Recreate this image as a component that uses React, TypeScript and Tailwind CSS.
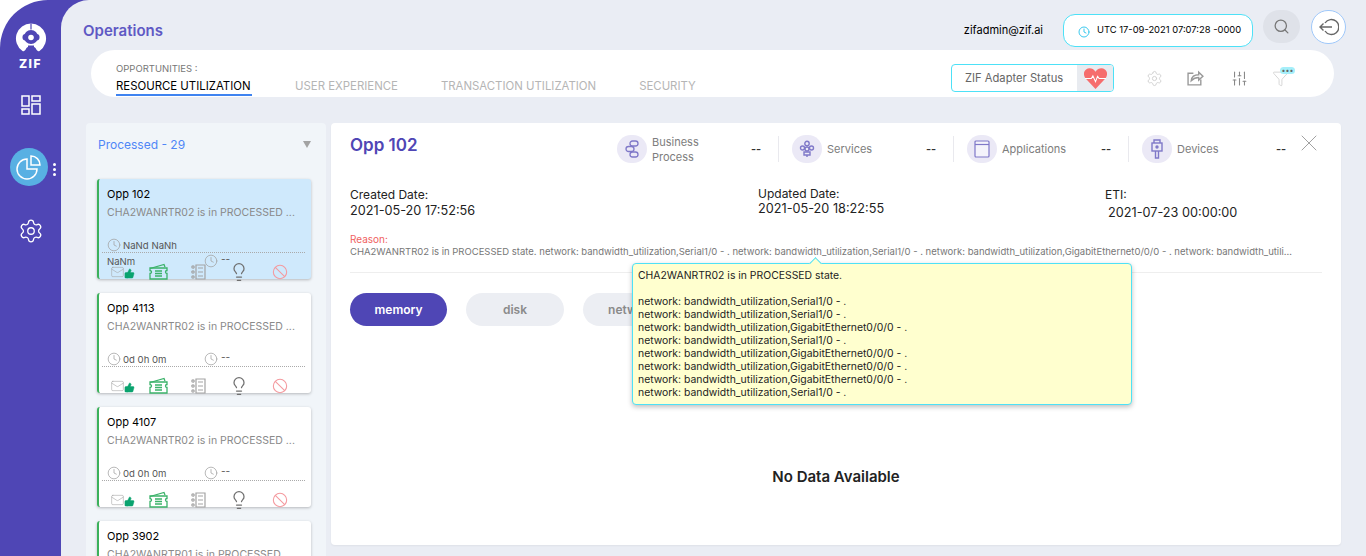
import { Search, Clock, X, Settings, SlidersVertical, Funnel, Lightbulb, Ban, ThumbsUp, Mail } from "lucide-react"

function Logo() {
  return (
    <svg width="32" height="32" viewBox="0 0 32 32">
      <path d="M16 1.500a15 15 0 0 1 8.500 27.400c-1.500.8-2.500-.4-3.300-1.700-.7-1.200-1.200-2.200-2.200-2.200v-1.500h-6V25c-1 0-1.500 1-2.200 2.200-.8 1.300-1.800 2.500-3.300 1.700A15 15 0 0 1 16 1.500z" fill="#fff" />
      <circle cx="16" cy="15" r="7" fill="#4f46b5" />
      <rect x="7.500" y="12" width="17" height="6.500" rx="3" fill="#4f46b5" />
      <circle cx="16" cy="15.500" r="2.800" fill="#fff" />
      <rect x="15.400" y="1.500" width="1.200" height="6" fill="#4f46b5" />
    </svg>
  )
}

function DashIcon() {
  return (
    <svg width="22" height="22" viewBox="0 0 22 22" fill="none" stroke="#fff" strokeWidth="1.500">
      <rect x="2" y="2" width="7" height="10" />
      <rect x="12" y="2" width="8" height="5" />
      <rect x="2" y="15" width="7" height="5" />
      <rect x="12" y="10" width="8" height="10" />
    </svg>
  )
}

function PieIcon() {
  return (
    <svg width="26" height="26" viewBox="0 0 26 26" fill="none" stroke="#fff" strokeWidth="1.500">
      <path d="M11 5a10 10 0 1 0 10 10H11z" />
      <path d="M15 2a9 9 0 0 1 9 9h-9z" />
    </svg>
  )
}

function LogoutIcon() {
  return (
    <svg width="20" height="18" viewBox="0 0 20 18" fill="none" stroke="#666" strokeWidth="1.400">
      <path d="M6 5a7.500 7.500 0 1 1 0 8" />
      <path d="M13 9H1M4.500 5.500 1 9l3.500 3.500" />
    </svg>
  )
}

function HeartIcon() {
  return (
    <svg width="23" height="21" viewBox="0 0 22 20">
      <path d="M11 20 2 10.500C-1 7-.5 3 2 1.300 5-.7 9 .3 11 3.500 13 .3 17-.7 20 1.300c2.500 1.700 3 5.700 0 9.200z" fill="#f66d6d" />
      <path d="M1 10h6l1.500-2.500L11 13l2-5 1.500 2H21" fill="none" stroke="#fff" strokeWidth="1" />
    </svg>
  )
}

function ShareIcon() {
  return (
    <svg width="17" height="16" viewBox="0 0 16 15" fill="none" stroke="#999" strokeWidth="1.300">
      <path d="M13 9v5H1V3h5" />
      <path d="M4 10c.5-4 3-5.500 7-5.500V2l4 3.800-4 3.700V7c-3 0-5 1-7 3z" />
    </svg>
  )
}

function BusinessIcon() {
  return (
    <svg width="16" height="18" viewBox="0 0 16 18" fill="none" stroke="#7f78c8" strokeWidth="1.300">
      <rect x="6" y="1" width="8" height="5" rx="2.500" />
      <rect x="2" y="6.500" width="8" height="5" rx="2.500" />
      <rect x="6" y="12" width="8" height="5" rx="2.500" />
    </svg>
  )
}

function ServicesIcon() {
  return (
    <svg width="16" height="18" viewBox="0 0 16 18" fill="none" stroke="#7f78c8" strokeWidth="1.400">
      <circle cx="8" cy="3.500" r="2.200" />
      <circle cx="3.500" cy="8" r="2" />
      <circle cx="12.500" cy="8" r="2" />
      <circle cx="8" cy="9" r="2" />
      <path d="M5 12h6v3H5zM8 15v2" />
    </svg>
  )
}

function AppIcon() {
  return (
    <svg width="16" height="18" viewBox="0 0 16 18" stroke="#7f78c8" strokeWidth="1.200">
      <rect x="1" y="1" width="14" height="16" rx="1" fill="#f4f3fb" />
      <path d="M1 4.500h14" fill="none" />
    </svg>
  )
}

function DeviceIcon() {
  return (
    <svg width="12" height="20" viewBox="0 0 12 20" fill="none" stroke="#7f78c8" strokeWidth="1.400">
      <rect x="1" y="4" width="10" height="8" />
      <path d="M3 4V1h6v3M4.500 12v7h3v-7" />
      <circle cx="6" cy="8" r="1" fill="#7f78c8" />
    </svg>
  )
}

function TicketIcon() {
  return (
    <svg width="19" height="17" viewBox="0 0 19 17" fill="none" stroke="#3bb26a" strokeWidth="1.300">
      <path d="M1 5.500 15 1.500l1 2.500" />
      <path d="M1 5h17v2.500a1.500 1.500 0 0 0 0 3V16H1v-5.500a1.500 1.500 0 0 0 0-3z" />
      <path d="M6 8h7M6 10.500h7M6 13h7" strokeWidth="1.500" />
    </svg>
  )
}

function ListIcon() {
  return (
    <svg width="15" height="16" viewBox="0 0 15 16" fill="none" stroke="#a3a3a3" strokeWidth="1.200">
      <path d="M5 1h9v14H5z" />
      <path d="M7 4h5M7 8h5M7 12h5" />
      <circle cx="2" cy="3" r="1.200" />
      <circle cx="2" cy="8" r="1.200" />
      <circle cx="2" cy="13" r="1.200" />
    </svg>
  )
}

function SmallClock() {
  return <Clock className="h-[14px] w-[14px] shrink-0 text-[#a3a3a3]" strokeWidth={1.3} />
}

function OppCard({ title, desc, time, active }: { title: string; desc: string; time: string; active?: boolean }) {
  return (
    <div
      className={`h-[100px] shrink-0 rounded-[3px] border-l-2 border-[#3bb15b] pl-2 pr-[6px] pt-2 shadow-[0_1px_3px_rgba(0,0,0,0.25)] ${active ? "bg-[#cfe9fc]" : "bg-white"}`}
    >
      <div className="text-[11px] leading-[14px] text-black">{title}</div>
      <div className="mt-[5px] truncate text-[10.5px] leading-[14px] text-[#8a8a8a]">{desc}</div>
      <div className="-ml-[5px] mt-[18px] flex h-[15px] items-start border-b border-dotted border-[#aaaaaa] pl-[5px]">
        <div className="w-[97px] text-[9.6px] leading-[16px] text-[#555]">
          <SmallClock />
          <div className={active ? "-mt-[14px] w-[90px] indent-4" : "-mt-[14px] pl-4"}>{time}</div>
        </div>
        <div className={`flex items-start gap-[3px] text-[10px] leading-[10px] text-[#555] ${active ? "mt-4" : ""}`}>
          <SmallClock />
          --
        </div>
      </div>
      <div className="mt-[10px] flex h-[17px] items-center pl-[3px]">
        <div className="flex w-[39px] items-end">
          <Mail className="h-[14px] w-[15px] text-[#a3a3a3]" strokeWidth={1} />
          <ThumbsUp className="-ml-[1px] h-[11px] w-[11px] fill-[#0aa36f] text-[#0aa36f]" strokeWidth={1} />
        </div>
        <div className="w-[42px]">
          <TicketIcon />
        </div>
        <div className="w-[42px]">
          <ListIcon />
        </div>
        <div className="-ml-[4px] w-[43px]">
          <Lightbulb className="h-[20px] w-[20px] text-[#6f6f6f]" strokeWidth={1.5} />
        </div>
        <Ban className="h-[16px] w-[16px] text-[#f49a9f]" strokeWidth={1.6} />
      </div>
    </div>
  )
}

function Stat({ icon, label, last }: { icon: React.ReactNode; label: React.ReactNode; last?: boolean }) {
  return (
    <div className="flex h-[28px] w-[175px] items-center">
      <div className="flex h-[28px] w-[30px] items-center justify-center rounded-full bg-[#ebe9f6]">{icon}</div>
      <div className={`ml-[5px] w-[99px] text-[11px] leading-[15px] text-[#7d7d7d] ${typeof label === "string" ? "" : "pt-[2px]"}`}>{label}</div>
      <div className="text-[11px] font-semibold text-[#333]">--</div>
      {!last && <div className="ml-[17px] h-[26px] border-l border-[#e9e9ee]" />}
    </div>
  )
}

const tooltipLines = [
  "network: bandwidth_utilization,Serial1/0 - .",
  "network: bandwidth_utilization,Serial1/0 - .",
  "network: bandwidth_utilization,GigabitEthernet0/0/0 - .",
  "network: bandwidth_utilization,Serial1/0 - .",
  "network: bandwidth_utilization,GigabitEthernet0/0/0 - .",
  "network: bandwidth_utilization,GigabitEthernet0/0/0 - .",
  "network: bandwidth_utilization,GigabitEthernet0/0/0 - .",
  "network: bandwidth_utilization,Serial1/0 - .",
]

export default function App() {
  return (
    <div className="h-[556px] w-[1366px] overflow-hidden bg-white font-['Inter','Noto_Sans',sans-serif]">
      <div className="flex h-full rounded-tl-[48px] bg-[#4f46b5]">
        <aside className="relative flex w-[61px] shrink-0 flex-col items-center pt-[22px]">
          <Logo />
          <div className="mt-[3px] text-[12px] font-extrabold leading-[14px] tracking-[1.5px] text-white">ZIF</div>
          <div className="mt-[23px]">
            <DashIcon />
          </div>
          <div className="-ml-[3px] mt-[32px] flex h-[38px] w-[38px] items-center justify-center rounded-full bg-[#58b0e3]">
            <PieIcon />
          </div>
          <div className="absolute left-[53px] top-[163px] flex flex-col gap-[2px]">
            <div className="h-[3px] w-[3px] rounded-full bg-white" />
            <div className="h-[3px] w-[3px] rounded-full bg-white" />
            <div className="h-[3px] w-[3px] rounded-full bg-white" />
          </div>
          <Settings className="mt-[32px] h-[26px] w-[26px] text-white" strokeWidth={1.2} />
        </aside>

        <main className="relative flex min-w-0 flex-1 flex-col rounded-tl-[28px] bg-[#eaedf4]">
          <header className="flex h-[50px] shrink-0 items-start pl-[22px] pr-[20px]">
            <div className="mt-[21px] text-[15px] font-semibold leading-[20px] text-[#5f59c4]">Operations</div>
            <div className="ml-auto flex items-start pt-[10px]">
              <div className="mt-[13px] text-[11px] leading-[14px] text-black">zifadmin@zif.ai</div>
              <div className="ml-[20px] mt-[4px] flex h-[33px] w-[190px] items-center rounded-[12px] border border-[#4de1f7] bg-white pl-[14px]">
                <Clock className="mt-[3px] h-[12px] w-[12px] text-[#3cc9ee]" strokeWidth={2} />
                <span className="ml-[7px] text-[9.4px] text-black">UTC 17-09-2021 07:07:28 -0000</span>
              </div>
              <div className="ml-[10px] flex h-[33px] w-[37px] items-center justify-center rounded-full bg-[#dfe2e9]">
                <Search className="h-[17px] w-[17px] text-[#777]" strokeWidth={1.8} />
              </div>
              <div className="ml-[11px] flex h-[34px] w-[35px] items-center justify-center rounded-full border border-[#9fc8fa] bg-white">
                <LogoutIcon />
              </div>
            </div>
          </header>

          <div className="ml-[30px] mr-[32px] flex h-[47px] shrink-0 items-start rounded-[24px] bg-white pl-[25px] pr-[45px]">
            <div className="flex items-end gap-[43px] pt-[13px]">
              <div>
                <div className="text-[9.5px] leading-[12px] text-[#777]">OPPORTUNITIES :</div>
                <div className="mt-[4px] h-[17px] w-[136px] whitespace-nowrap border-b-2 border-[#3f83f0] text-[11.4px] leading-[14px] text-black">
                  RESOURCE UTILIZATION
                </div>
              </div>
              <div className="h-[17px] whitespace-nowrap text-[11.4px] leading-[14px] text-[#b5b5b5]">USER EXPERIENCE</div>
              <div className="h-[17px] whitespace-nowrap text-[11.4px] leading-[14px] text-[#b5b5b5]">TRANSACTION UTILIZATION</div>
              <div className="h-[17px] whitespace-nowrap text-[11.4px] leading-[14px] text-[#b5b5b5]">SECURITY</div>
            </div>
            <div className="ml-auto flex items-center pt-[14px]">
              <div className="flex h-[28px] w-[163px] items-stretch overflow-hidden rounded-[4px] border border-[#4de1f7]">
                <div className="flex flex-1 items-center pl-[13px] text-[11.2px] text-[#666]">ZIF Adapter Status</div>
                <div className="flex w-[36px] items-center justify-center bg-[#e8ebf0]">
                  <HeartIcon />
                </div>
              </div>
              <Settings className="ml-[32px] h-[17px] w-[17px] text-[#cfcfcf]" strokeWidth={1.3} />
              <div className="ml-[24px]">
                <ShareIcon />
              </div>
              <SlidersVertical className="ml-[27px] h-[17px] w-[17px] text-[#888]" strokeWidth={1.5} />
              <div className="relative ml-[24px]">
                <Funnel className="h-[17px] w-[17px] text-[#d0d0d0]" strokeWidth={1.2} />
                <div className="absolute -top-[3px] left-[8px] flex h-[7px] w-[15px] items-center justify-center rounded-full bg-[#a5effa] text-[7px] leading-none text-[#666]">
                  •••
                </div>
              </div>
            </div>
          </div>

          <div className="mt-[26px] flex min-h-0 flex-1 items-start gap-[5px] pl-[25px] pr-[25px]">
            <div className="flex h-[440px] w-[240px] shrink-0 flex-col gap-[14px] overflow-hidden rounded-t-[4px] bg-[#f1f5f9] pl-[11px] pr-[15px]">
              <div className="flex h-[42px] shrink-0 items-center justify-between pl-[1px] pt-[1px]">
                <div className="text-[12px] text-[#4f86f7]">Processed - 29</div>
                <div className="h-0 w-0 border-x-[4px] border-t-[7px] border-x-transparent border-t-[#a3a3a3]" />
              </div>
              <OppCard active title="Opp 102" desc="CHA2WANRTR02 is in PROCESSED ..." time="NaNd NaNh NaNm" />
              <OppCard title="Opp 4113" desc="CHA2WANRTR02 is in PROCESSED ..." time="0d 0h 0m" />
              <OppCard title="Opp 4107" desc="CHA2WANRTR02 is in PROCESSED ..." time="0d 0h 0m" />
              <OppCard title="Opp 3902" desc="CHA2WANRTR01 is in PROCESSED ..." time="0d 0h 0m" />
            </div>

            <section className="relative flex h-[422px] flex-1 flex-col rounded-[4px] bg-white pl-[19px] pr-[19px] pt-[12px] shadow-[0_1px_2px_rgba(0,0,0,0.05)]">
              <div className="flex items-start">
                <div className="w-[267px] text-[17px] font-semibold leading-[20px] text-[#4f46b5]">Opp 102</div>
                <Stat icon={<BusinessIcon />} label={<>Business<br />Process</>} />
                <Stat icon={<ServicesIcon />} label="Services" />
                <Stat icon={<AppIcon />} label="Applications" />
                <Stat last icon={<DeviceIcon />} label="Devices" />
                <X className="absolute right-[18px] top-[6px] h-[28px] w-[28px] text-[#9a9a9a]" strokeWidth={0.8} />
              </div>

              <div className="mt-[21px] grid grid-cols-[408px_347px_1fr] items-start text-[12.7px] leading-[16px] text-[#222]">
                <div>
                  <div className="pt-[3px] text-[12px]">Created Date:</div>
                  <div>2021-05-20 17:52:56</div>
                </div>
                <div>
                  <div className="pt-[2px] text-[12px]">Updated Date:</div>
                  <div className="-mt-[1px]">2021-05-20 18:22:55</div>
                </div>
                <div>
                  <div className="pt-[3px] text-[12px]">ETI:</div>
                  <div className="ml-[3px] mt-[2px]">2021-07-23 00:00:00</div>
                </div>
              </div>

              <div className="mt-[12px] text-[10px] leading-[12px] text-[#f0625f]">Reason:</div>
              <div className="w-[942px] truncate text-[9.5px] leading-[13px] text-[#777]">
                CHA2WANRTR02 is in PROCESSED state. network: bandwidth_utilization,Serial1/0 - . network: bandwidth_utilization,Serial1/0 - . network: bandwidth_utilization,GigabitEthernet0/0/0 - . network: bandwidth_utilization,Serial1/0 - .
              </div>
              <div className="mt-[14px] border-t border-[#eeeeee]" />

              <div className="mt-[20px] flex gap-[19px]">
                <div className="flex h-[33px] w-[97px] items-center justify-center rounded-full bg-[#4f46b5] text-[12px] font-semibold text-white">memory</div>
                <div className="flex h-[33px] w-[98px] items-center justify-center rounded-full bg-[#eceef3] text-[12px] font-semibold text-[#8a8a8a]">disk</div>
                <div className="flex h-[33px] w-[98px] items-center justify-center rounded-full bg-[#eceef3] text-[12px] font-semibold text-[#8a8a8a]">network</div>
              </div>

              <div className="mt-[142px] text-center text-[15px] font-semibold leading-[18px] text-[#222]">No Data Available</div>

              <div className="absolute left-[301px] top-[140px] w-[500px] rounded-[4px] border border-[#4de1f7] bg-[#ffffcf] px-[5px] py-[5px] text-[10.4px] leading-[13px] text-[#222] shadow-[0_2px_5px_rgba(0,0,0,0.25)]">
                <div className="absolute -top-[5px] left-[178px] h-[9px] w-[9px] rotate-45 border-l border-t border-[#4de1f7] bg-[#ffffcf]" />
                <div>CHA2WANRTR02 is in PROCESSED state.</div>
                <div className="h-[13px]" />
                {tooltipLines.map((line, i) => (
                  <div key={i}>{line}</div>
                ))}
              </div>
            </section>
          </div>
        </main>
      </div>
    </div>
  )
}
